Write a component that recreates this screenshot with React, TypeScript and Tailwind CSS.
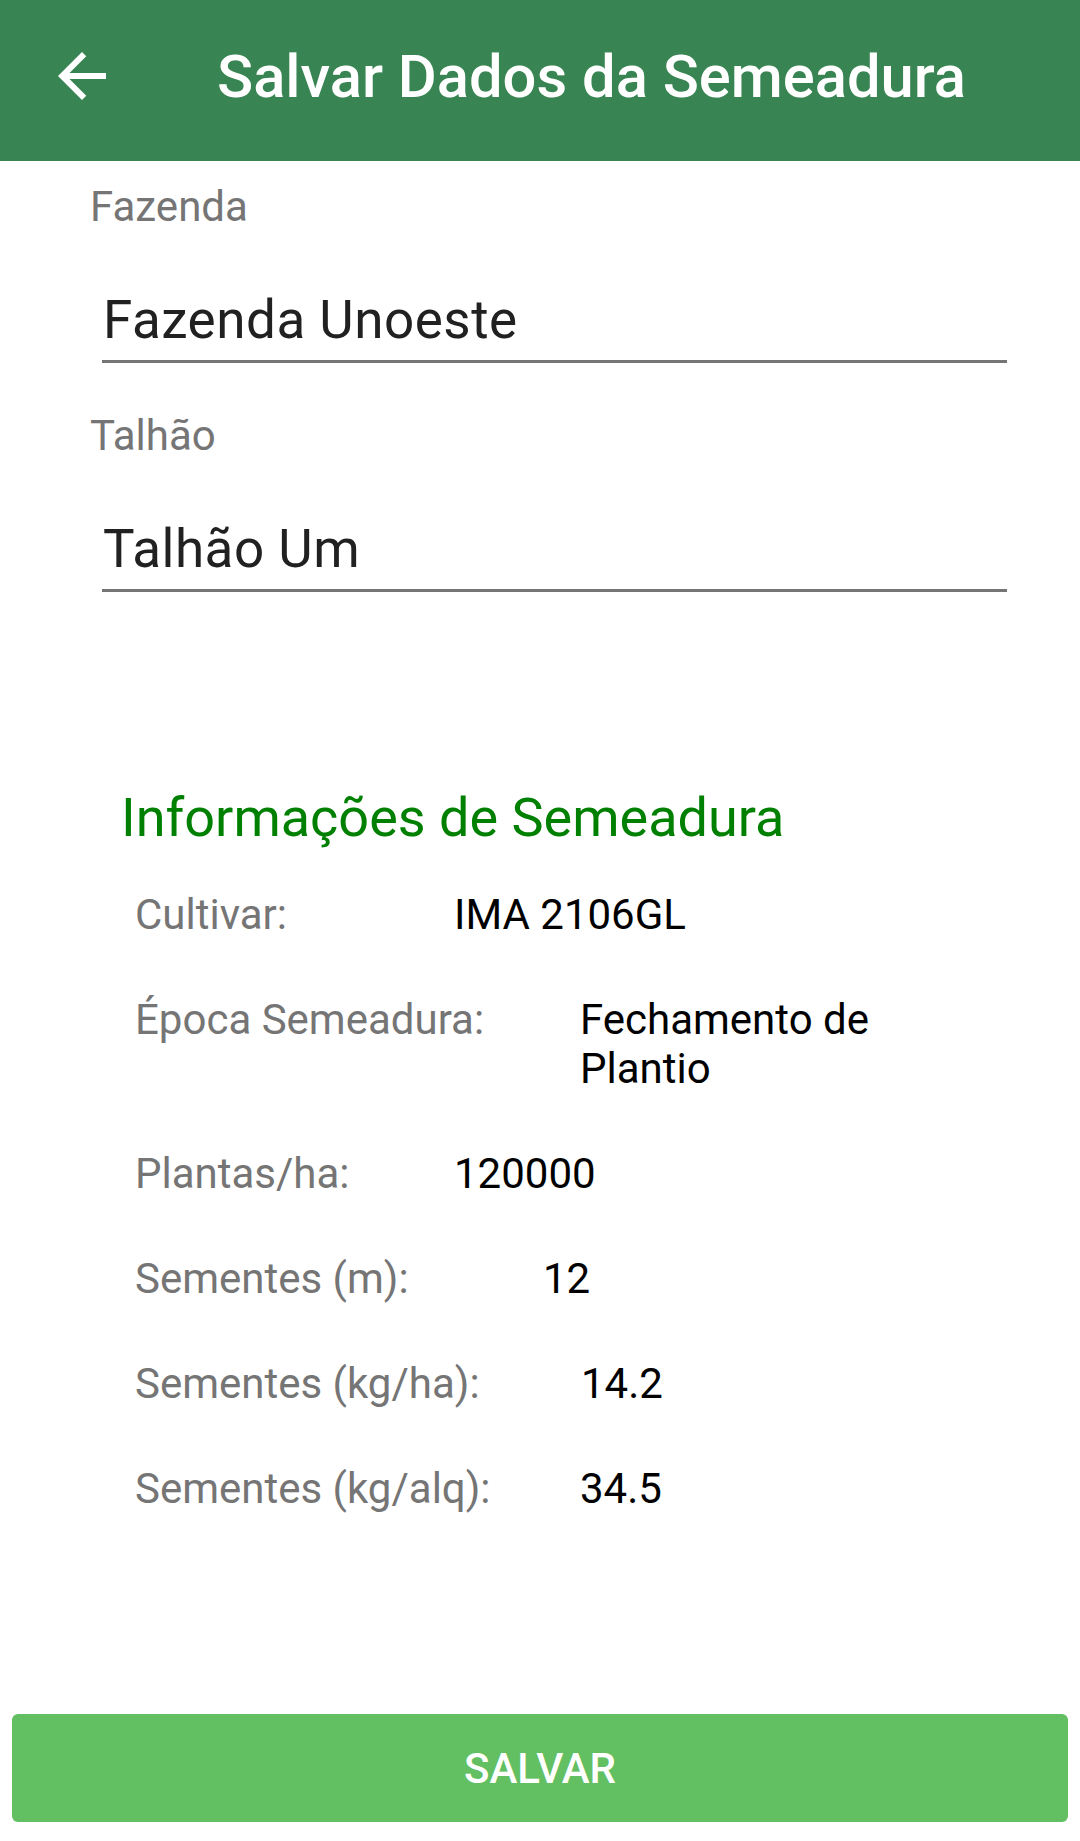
const ROWS = [
  { label: "Cultivar:", value: "IMA 2106GL", labelW: "w-[319px]" },
  { label: "Época Semeadura:", value: "Fechamento de Plantio", labelW: "w-[445px]" },
  { label: "Plantas/ha:", value: "120000", labelW: "w-[319px]" },
  { label: "Sementes (m):", value: "12", labelW: "w-[408px]" },
  { label: "Sementes (kg/ha):", value: "14.2", labelW: "w-[446px]" },
  { label: "Sementes (kg/alq):", value: "34.5", labelW: "w-[445px]" },
];

function Field({ label, value, top }: { label: string; value: string; top: string }) {
  return (
    <div className={top}>
      <p className="pl-[90px] text-[42px] leading-[49px] text-[#757575]">{label}</p>
      <div className="ml-[102px] mr-[73px] mt-[59px] border-b-[3px] border-[#757575] pb-[9px]">
        <p className="pl-px text-[53px] leading-[61px] tracking-[0.5px] text-[#212121]">{value}</p>
      </div>
    </div>
  );
}

export default function App() {
  return (
    <div className="min-h-[1841px] bg-white font-['Roboto',sans-serif]">
      <header className="flex h-[161px] items-center bg-[#388452] pl-[46px]">
        <svg viewBox="0 0 24 24" className="-mt-[10px] h-[72px] w-[72px] fill-white">
          <path d="M20 11H7.83l5.59-5.59L12 4l-8 8 8 8 1.41-1.41L7.83 13H20v-2z" />
        </svg>
        <h1 className="-mt-[5px] ml-[99px] text-[59.7px] font-medium leading-none text-white">
          Salvar Dados da Semeadura
        </h1>
      </header>

      <Field label="Fazenda" value="Fazenda Unoeste" top="mt-[21px]" />
      <Field label="Talhão" value="Talhão Um" top="mt-[48px]" />

      <section className="mt-[195px]">
        <h2 className="pl-[121px] text-[54px] leading-[61px] text-[#008000]">
          Informações de Semeadura
        </h2>
        <div className="mt-[42px] flex flex-col gap-[56px] pl-[135px]">
          {ROWS.map((row) => (
            <div key={row.label} className="flex text-[42px] leading-[49px]">
              <span className={`${row.labelW} shrink-0 text-[#757575]`}>{row.label}</span>
              <span className="w-[330px] text-black">{row.value}</span>
            </div>
          ))}
        </div>
      </section>

      <div className="mx-3 mt-[201px]">
        <button className="flex h-[108px] w-full items-center justify-center rounded-[6px] bg-[#62bf62] text-[42px] font-medium text-white">
          SALVAR
        </button>
      </div>
    </div>
  );
}
